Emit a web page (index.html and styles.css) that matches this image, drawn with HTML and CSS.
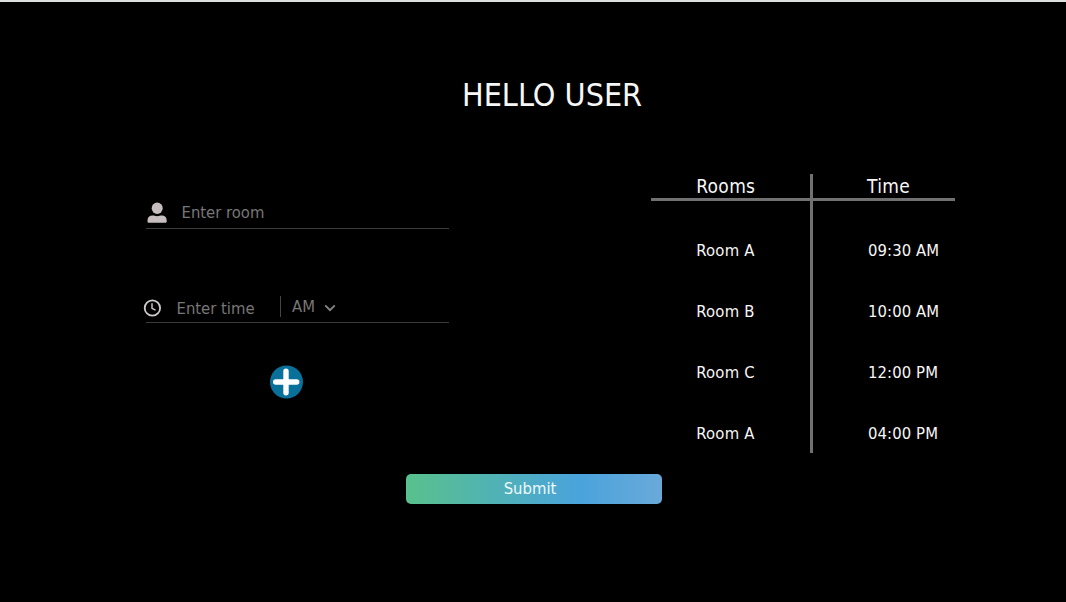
FILE: index.html
```
<!DOCTYPE html>
<html lang="en">
<head>
<meta charset="utf-8">
<title>Hello User</title>
<link rel="stylesheet" href="styles.css">
</head>
<body>
<h1 class="title">HELLO USER</h1>
<main class="content">
  <form class="form">
    <div class="field field-room">
      <svg class="icon-user" viewBox="0 0 20 21"><ellipse cx="10.2" cy="6.300" rx="5.5" ry="5.7"/><path d="M.5 18.500c0-3.2 2-5 5-5 1.6 0 2.6.7 4.6.7s3-.7 4.7-.7c3 0 4.9 1.800 4.900 5v1c0 .8-.6 1.300-1.400 1.300H1.900c-.8 0-1.400-.5-1.400-1.300z"/></svg>
      <span class="hint">Enter room</span>
    </div>
    <div class="field field-time">
      <svg class="icon-clock" viewBox="0 0 18 18"><circle cx="9.400" cy="9" r="7.700"/><path d="M9 4.300v5l3.500 1.900"/></svg>
      <span class="hint hint-time">Enter time</span>
      <span class="period">AM<svg class="chevron" viewBox="0 0 12 8"><path d="M1.200 1.300 6 6.200l4.800-4.900"/></svg></span>
    </div>
    <svg class="add" viewBox="0 0 34 34"><circle cx="16.500" cy="17" r="16.500"/><path d="M16 6.300v21.500M5.700 17h21"/></svg>
  </form>
  <section class="table">
    <div class="col col-room">
      <div class="head">Rooms</div>
      <div class="cell">Room A</div>
      <div class="cell">Room B</div>
      <div class="cell">Room C</div>
      <div class="cell">Room A</div>
    </div>
    <div class="col col-time">
      <div class="head">Time</div>
      <div class="cell">09:30 AM</div>
      <div class="cell">10:00 AM</div>
      <div class="cell">12:00 PM</div>
      <div class="cell">04:00 PM</div>
    </div>
  </section>
</main>
<button class="submit">Submit</button>
</body>
</html>
```
FILE: styles.css
```
* { box-sizing: border-box; }
body {
  margin: 0;
  height: 602px;
  overflow: hidden;
  border-top: 2px solid #dcdfdf;
  background: #000;
  color: #f7f7f7;
  font: 16.5px/24px "DejaVu Sans Condensed", "DejaVu Sans", sans-serif;
  font-stretch: condensed;
  white-space: nowrap;
}
.title {
  margin: 0;
  padding: 73px 0 0 462px;
  font-size: 32px;
  font-weight: 400;
  line-height: 40px;
}
.content {
  display: flex;
  justify-content: space-between;
  height: 279px;
  margin: 59px 111px 0 143px;
}
.form { width: 306px; padding-top: 23px; }
.field { display: flex; align-items: center; color: #777; position: relative; }
.field::after {
  content: "";
  position: absolute;
  left: 3px;
  right: 0;
  bottom: 0;
  height: 1px;
  background: #3b3b3b;
}
.field-room { height: 32px; padding: 0 0 1px 4px; }
.field-time { height: 29px; margin-top: 65px; padding-bottom: 1px; }
.icon-user { width: 20px; height: 21px; fill: #c6bebe; }
.hint { margin-left: 14.5px; }
.icon-clock { width: 18px; height: 18px; fill: none; stroke: #d0cccc; stroke-width: 1.8; }
.icon-clock path { stroke-width: 1.4; }
.hint-time { margin-left: 15.5px; width: 103.5px; padding-top: 2px; }
.period {
  display: flex;
  align-items: center;
  height: 21px;
  margin-bottom: 3px;
  padding-left: 11px;
  border-left: 1px solid #444;
}
.chevron { width: 12px; height: 8px; margin: 3px 0 0 9px; fill: none; stroke: #888; stroke-width: 1.7; }
.add { display: block; width: 34px; height: 34px; margin: 42px 0 0 127px; fill: #087099; }
.add path { stroke: #fff; stroke-width: 5.4; stroke-linecap: round; }
.table { display: flex; width: 304px; }
.col-room { width: 162px; border-right: 3px solid #717171; }
.col-time { flex: 1; }
.head { height: 27px; border-bottom: 3px solid #717171; font-size: 19px; letter-spacing: 0.3px; margin-bottom: 38px; }
.cell { height: 24px; margin-bottom: 37px; letter-spacing: 0.2px; }
.col-room .head, .col-room .cell { padding-left: 45.3px; }
.col-time .head { padding-left: 54px; }
.col-time .cell { padding-left: 55px; letter-spacing: 0.1px; }
.submit {
  display: block;
  width: 256px;
  height: 30px;
  margin: 21px 0 0 406px;
  padding: 0 8px 0 0;
  border: 0;
  border-radius: 5px;
  background: linear-gradient(90deg, #58c18c, #4aa3dc 68%, #6aa9da);
  color: #f0fafa;
  font: inherit;
}
```
